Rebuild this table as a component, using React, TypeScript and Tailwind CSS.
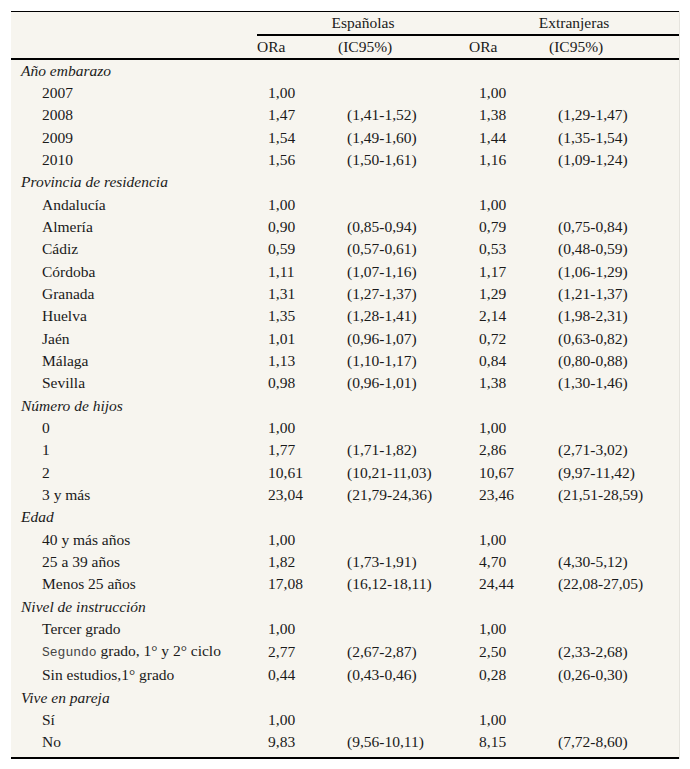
import React from "react";

type Row =
  | { kind: "cat"; label: string }
  | { kind: "item"; label: React.ReactNode; a: string; b?: string; c: string; d?: string };

const rows: Row[] = [
  { kind: "cat", label: "Año embarazo" },
  { kind: "item", label: "2007", a: "1,00", c: "1,00" },
  { kind: "item", label: "2008", a: "1,47", b: "(1,41-1,52)", c: "1,38", d: "(1,29-1,47)" },
  { kind: "item", label: "2009", a: "1,54", b: "(1,49-1,60)", c: "1,44", d: "(1,35-1,54)" },
  { kind: "item", label: "2010", a: "1,56", b: "(1,50-1,61)", c: "1,16", d: "(1,09-1,24)" },
  { kind: "cat", label: "Provincia de residencia" },
  { kind: "item", label: "Andalucía", a: "1,00", c: "1,00" },
  { kind: "item", label: "Almería", a: "0,90", b: "(0,85-0,94)", c: "0,79", d: "(0,75-0,84)" },
  { kind: "item", label: "Cádiz", a: "0,59", b: "(0,57-0,61)", c: "0,53", d: "(0,48-0,59)" },
  { kind: "item", label: "Córdoba", a: "1,11", b: "(1,07-1,16)", c: "1,17", d: "(1,06-1,29)" },
  { kind: "item", label: "Granada", a: "1,31", b: "(1,27-1,37)", c: "1,29", d: "(1,21-1,37)" },
  { kind: "item", label: "Huelva", a: "1,35", b: "(1,28-1,41)", c: "2,14", d: "(1,98-2,31)" },
  { kind: "item", label: "Jaén", a: "1,01", b: "(0,96-1,07)", c: "0,72", d: "(0,63-0,82)" },
  { kind: "item", label: "Málaga", a: "1,13", b: "(1,10-1,17)", c: "0,84", d: "(0,80-0,88)" },
  { kind: "item", label: "Sevilla", a: "0,98", b: "(0,96-1,01)", c: "1,38", d: "(1,30-1,46)" },
  { kind: "cat", label: "Número de hijos" },
  { kind: "item", label: "0", a: "1,00", c: "1,00" },
  { kind: "item", label: "1", a: "1,77", b: "(1,71-1,82)", c: "2,86", d: "(2,71-3,02)" },
  { kind: "item", label: "2", a: "10,61", b: "(10,21-11,03)", c: "10,67", d: "(9,97-11,42)" },
  { kind: "item", label: "3 y más", a: "23,04", b: "(21,79-24,36)", c: "23,46", d: "(21,51-28,59)" },
  { kind: "cat", label: "Edad" },
  { kind: "item", label: "40 y más años", a: "1,00", c: "1,00" },
  { kind: "item", label: "25 a 39 años", a: "1,82", b: "(1,73-1,91)", c: "4,70", d: "(4,30-5,12)" },
  { kind: "item", label: "Menos 25 años", a: "17,08", b: "(16,12-18,11)", c: "24,44", d: "(22,08-27,05)" },
  { kind: "cat", label: "Nivel de instrucción" },
  { kind: "item", label: "Tercer grado", a: "1,00", c: "1,00" },
  {
    kind: "item",
    label: (
      <>
        <span className="font-mono text-[13px] text-[#444]">Segundo</span> grado, 1° y 2° ciclo
      </>
    ),
    a: "2,77",
    b: "(2,67-2,87)",
    c: "2,50",
    d: "(2,33-2,68)",
  },
  { kind: "item", label: "Sin estudios,1° grado", a: "0,44", b: "(0,43-0,46)", c: "0,28", d: "(0,26-0,30)" },
  { kind: "cat", label: "Vive en pareja" },
  { kind: "item", label: "Sí", a: "1,00", c: "1,00" },
  { kind: "item", label: "No", a: "9,83", b: "(9,56-10,11)", c: "8,15", d: "(7,72-8,60)" },
];

export default function App() {
  return (
    <div className="min-h-[769px] bg-white pt-[11px] pl-[11px] font-serif text-[15.5px] text-[#1a1a1a]">
      <table className="w-[668px] table-fixed border-collapse bg-[#f7f5ef] [font-family:Tinos,'Liberation_Serif','Times_New_Roman',Times,'Nimbus_Roman',Georgia,Cambria,serif] text-[15.5px] text-[#1a1a1a] shadow-[1px_0_0_#e6e4de]">
        <colgroup>
          <col className="w-[246px]" />
          <col className="w-[81px]" />
          <col className="w-[131px]" />
          <col className="w-[80px]" />
          <col className="w-[130px]" />
        </colgroup>
        <thead>
          <tr className="h-[23px] border-t border-black">
            <th className="p-0"></th>
            <th colSpan={2} className="border-b-2 border-black p-0 text-center font-normal leading-[22px]">
              Españolas
            </th>
            <th colSpan={2} className="border-b-2 border-black p-0 text-center font-normal leading-[22px]">
              Extranjeras
            </th>
          </tr>
          <tr className="h-[22px] border-b-2 border-black">
            <th className="p-0"></th>
            <th className="p-0 text-left font-normal leading-[22px]">ORa</th>
            <th className="p-0 text-left font-normal leading-[22px]">(IC95%)</th>
            <th className="p-0 text-left font-normal leading-[22px]">ORa</th>
            <th className="p-0 text-left font-normal leading-[22px]">(IC95%)</th>
          </tr>
        </thead>
        <tbody className="border-b-2 border-black">
          {rows.map((r, i) =>
            r.kind === "cat" ? (
              <tr key={i} className="h-[22.33px]">
                <td colSpan={5} className="p-0 pl-[10px] italic leading-[22px] whitespace-nowrap">
                  {r.label}
                </td>
              </tr>
            ) : (
              <tr key={i} className={i === rows.length - 1 ? "h-[27px] align-top" : "h-[22.33px]"}>
                <td className="p-0 pl-[31px] leading-[22px] whitespace-nowrap">{r.label}</td>
                <td className="p-0 pl-[11px] leading-[22px]">{r.a}</td>
                <td className="p-0 pl-[9px] leading-[22px] whitespace-nowrap">{r.b ?? ""}</td>
                <td className="p-0 pl-[10px] leading-[22px]">{r.c}</td>
                <td className="p-0 pl-[9px] leading-[22px] whitespace-nowrap">{r.d ?? ""}</td>
              </tr>
            )
          )}
        </tbody>
      </table>
    </div>
  );
}
